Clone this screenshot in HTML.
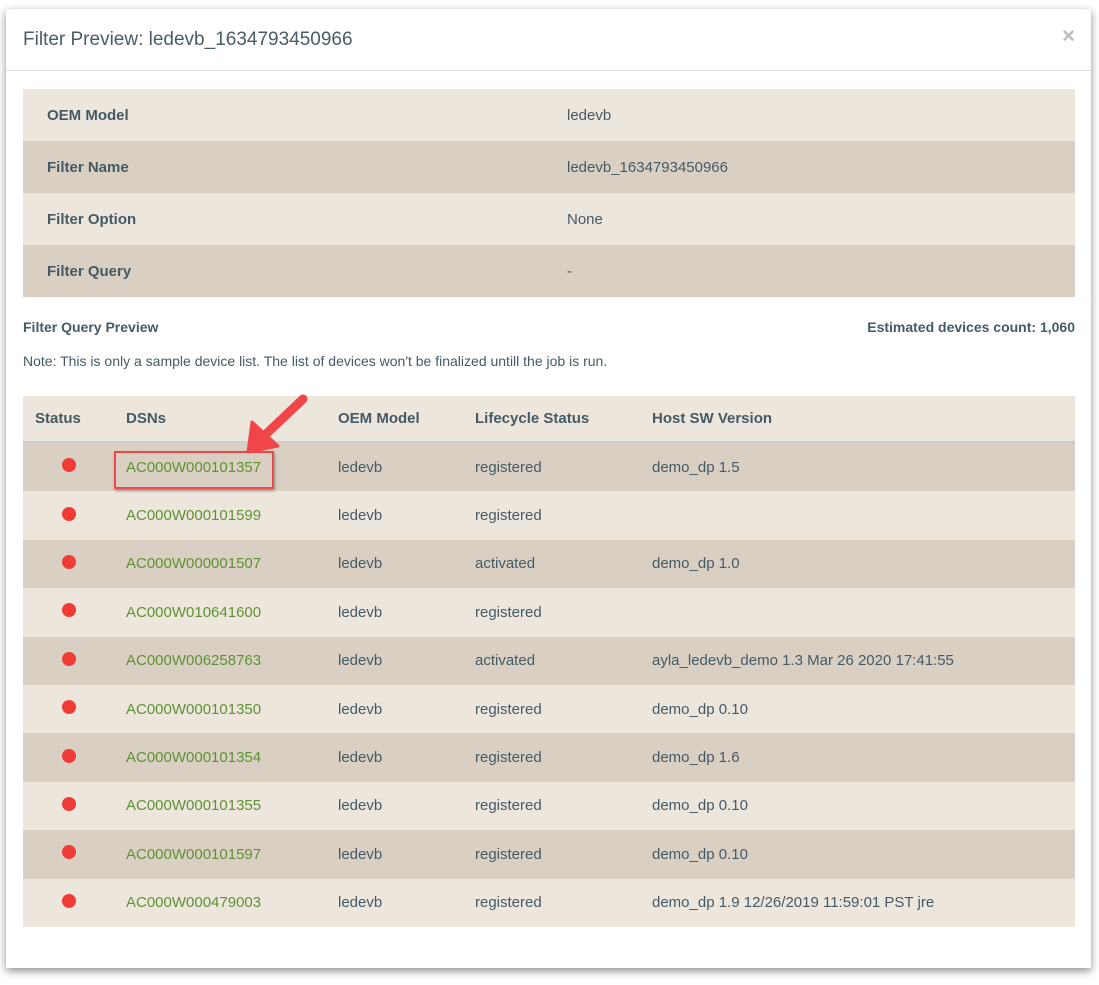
<!DOCTYPE html>
<html><head><style>
body{margin:0;width:1099px;height:985px;background:#fff;font-family:"Liberation Sans",sans-serif;color:#455a64;position:relative;overflow:hidden}
.modal{position:absolute;left:6px;top:9px;width:1085px;height:959px;background:#fff;box-shadow:0 3px 8px rgba(0,0,0,.45)}
.title{position:absolute;left:17px;top:20px;font-size:19px;color:#4a5c66}
.close{position:absolute;right:16px;top:14px;font-size:22px;color:#bbb;font-weight:bold}
.hr{position:absolute;left:0;right:0;top:61px;border-top:1px solid #ddd}
.info{position:absolute;left:17px;top:80px;width:1052px}
.info div{height:52px;display:flex;align-items:center;font-size:15px}
.info b{width:520px;padding-left:24px;font-weight:bold}
.l{background:#ede6dd}.d{background:#d9d0c3}
.fq{position:absolute;left:17px;top:310px;font-size:14px;font-weight:bold}
.est{position:absolute;right:16px;top:310px;font-size:14px;font-weight:bold}
.note{position:absolute;left:17px;top:344px;font-size:14px}
table{position:absolute;left:17px;top:387px;width:1052px;border-collapse:collapse;font-size:15px;table-layout:fixed}
th{height:46px;text-align:left;font-weight:bold;border-bottom:2px solid #c9ccd0;background:#ede6dd;box-sizing:border-box;padding:0}
td{height:48.4px;padding:0}
.dot{display:inline-block;width:14px;height:14px;border-radius:50%;background:#f03c36;margin-left:39px}
.g{color:#5f9134}
</style></head><body>
<div class="modal">
<div class="title">Filter Preview: ledevb_1634793450966</div>
<div class="close">×</div>
<div class="hr"></div>
<div class="info">
<div class="l"><b>OEM Model</b><span>ledevb</span></div>
<div class="d"><b>Filter Name</b><span>ledevb_1634793450966</span></div>
<div class="l"><b>Filter Option</b><span>None</span></div>
<div class="d"><b>Filter Query</b><span>-</span></div>
</div>
<div class="fq">Filter Query Preview</div>
<div class="est">Estimated devices count: 1,060</div>
<div class="note">Note: This is only a sample device list. The list of devices won't be finalized untill the job is run.</div>
<table>
<colgroup><col style="width:103px"><col style="width:212px"><col style="width:137px"><col style="width:177px"><col></colgroup>
<tr><th style="padding-left:12px">Status</th><th>DSNs</th><th>OEM Model</th><th>Lifecycle Status</th><th>Host SW Version</th></tr>
<tr class="d"><td><span class="dot"></span></td><td class="g">AC000W000101357</td><td>ledevb</td><td>registered</td><td>demo_dp 1.5</td></tr>
<tr class="l"><td><span class="dot"></span></td><td class="g">AC000W000101599</td><td>ledevb</td><td>registered</td><td></td></tr>
<tr class="d"><td><span class="dot"></span></td><td class="g">AC000W000001507</td><td>ledevb</td><td>activated</td><td>demo_dp 1.0</td></tr>
<tr class="l"><td><span class="dot"></span></td><td class="g">AC000W010641600</td><td>ledevb</td><td>registered</td><td></td></tr>
<tr class="d"><td><span class="dot"></span></td><td class="g">AC000W006258763</td><td>ledevb</td><td>activated</td><td>ayla_ledevb_demo 1.3 Mar 26 2020 17:41:55</td></tr>
<tr class="l"><td><span class="dot"></span></td><td class="g">AC000W000101350</td><td>ledevb</td><td>registered</td><td>demo_dp 0.10</td></tr>
<tr class="d"><td><span class="dot"></span></td><td class="g">AC000W000101354</td><td>ledevb</td><td>registered</td><td>demo_dp 1.6</td></tr>
<tr class="l"><td><span class="dot"></span></td><td class="g">AC000W000101355</td><td>ledevb</td><td>registered</td><td>demo_dp 0.10</td></tr>
<tr class="d"><td><span class="dot"></span></td><td class="g">AC000W000101597</td><td>ledevb</td><td>registered</td><td>demo_dp 0.10</td></tr>
<tr class="l"><td><span class="dot"></span></td><td class="g">AC000W000479003</td><td>ledevb</td><td>registered</td><td>demo_dp 1.9 12/26/2019 11:59:01 PST jre</td></tr>
</table>
</div>
<div style="position:absolute;left:114px;top:451px;width:156px;height:34px;border:2.5px solid #f0464a;box-shadow:1px 2px 3px rgba(0,0,0,.3)"></div>
<svg style="position:absolute;left:0;top:0" width="1099" height="985"><g fill="#f0464a" stroke="#f0464a" stroke-linecap="round" stroke-linejoin="round"><line x1="303" y1="399" x2="264" y2="436" stroke-width="9"/><polygon points="248,452 252,422 278,446" stroke-width="3"/></g></svg>
</body></html>
